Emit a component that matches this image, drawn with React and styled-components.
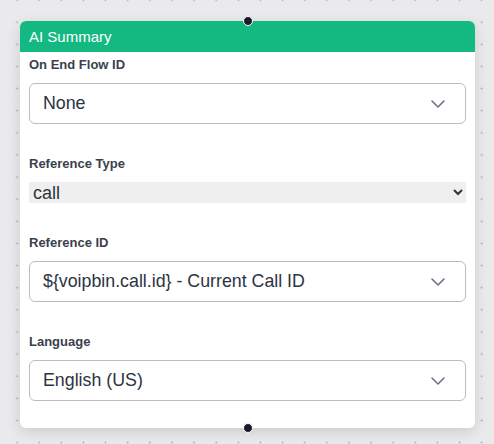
import React from "react"
import styled, { createGlobalStyle } from "styled-components"
import { ChevronDown } from "lucide-react"

const GlobalStyle = createGlobalStyle`
  html, body {
    margin: 0;
    padding: 0;
  }
  body {
    font-family: "Liberation Sans", Arial, sans-serif;
  }
`

const Canvas = styled.div`
  min-height: 444px;
  box-sizing: border-box;
  padding: 21px 0 0 20px;
  background-color: #eaeaec;
  background-image: radial-gradient(circle, #a8a9b2 0.8px, transparent 1.1px);
  background-size: 22.14px 22.14px;
  background-position: 6px -11px;
`

const Node = styled.div`
  position: relative;
  width: 455px;
  background: #fff;
  border-radius: 6px;
  box-shadow: 0 4px 14px rgba(0, 0, 0, 0.13);
`

const Handle = styled.span`
  position: absolute;
  left: 50%;
  ${(p) => (p.$bottom ? "bottom: -5px;" : "top: -5px;")}
  width: 8px;
  height: 8px;
  margin-left: -5px;
  border-radius: 50%;
  background: #1c1b2b;
  border: 1px solid #fff;
`

const Header = styled.div`
  display: flex;
  align-items: center;
  height: 31px;
  padding: 0 9px;
  background: #13b981;
  color: #fff;
  font-size: 15px;
  border-radius: 6px 6px 0 0;
`

const Body = styled.div`
  padding: 5px 9px 27px;
`

const Field = styled.div`
  & + & {
    margin-top: 32px;
  }
`

const Label = styled.div`
  font-size: 13px;
  line-height: 16px;
  font-weight: 700;
  color: #3b404c;
  margin-bottom: 10px;
`

const SelectBox = styled.div`
  display: flex;
  align-items: center;
  justify-content: space-between;
  height: 41px;
  box-sizing: border-box;
  padding: 0 15px 0 13px;
  border: 1px solid #b9bdc5;
  border-radius: 6px;
  font-size: 17.8px;
  color: #2b3442;
  svg {
    color: #6b7280;
    flex-shrink: 0;
  }
`

const NativeSelect = styled.select`
  display: block;
  width: 100%;
  height: 21px;
  margin: 0;
  border: none;
  border-radius: 0;
  background-color: #efefef;
  font-family: "Liberation Sans", Arial, sans-serif;
  font-size: 18px;
  color: #2b3442;
  outline: none;
`

function Dropdown({ value }) {
  return (
    <SelectBox>
      <span>{value}</span>
      <ChevronDown size={24} strokeWidth={1.6} />
    </SelectBox>
  )
}

export default function App() {
  return (
    <>
      <GlobalStyle />
      <Canvas>
        <Node>
          <Handle />
          <Header>AI Summary</Header>
          <Body>
            <Field>
              <Label>On End Flow ID</Label>
              <Dropdown value="None" />
            </Field>
            <Field>
              <Label>Reference Type</Label>
              <NativeSelect defaultValue="call">
                <option value="call">call</option>
              </NativeSelect>
            </Field>
            <Field>
              <Label>Reference ID</Label>
              <Dropdown value="${voipbin.call.id} - Current Call ID" />
            </Field>
            <Field>
              <Label>Language</Label>
              <Dropdown value="English (US)" />
            </Field>
          </Body>
          <Handle $bottom />
        </Node>
      </Canvas>
    </>
  )
}
